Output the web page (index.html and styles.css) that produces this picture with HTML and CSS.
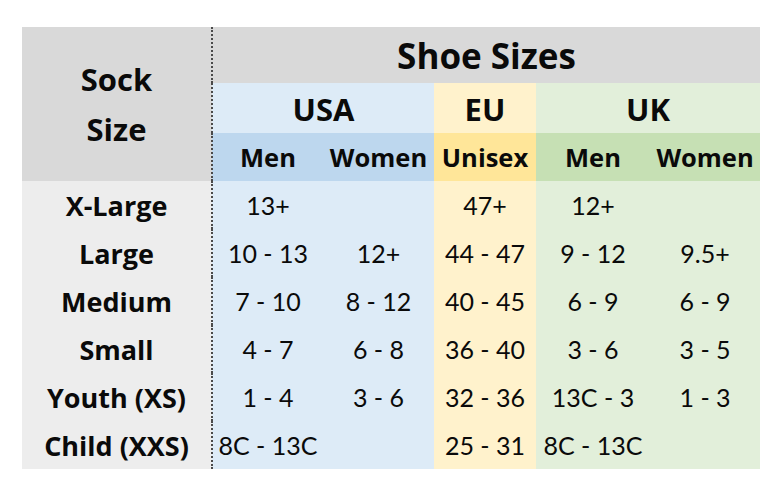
FILE: index.html
```html
<!DOCTYPE html>
<html>
<head>
<meta charset="utf-8">
<link rel="stylesheet" href="styles.css">
</head>
<body>
<table class="sizes">
  <colgroup>
    <col class="c-sock">
    <col class="c-usm">
    <col class="c-usw">
    <col class="c-eu">
    <col class="c-ukm">
    <col class="c-ukw">
  </colgroup>
  <thead>
    <tr class="r1">
      <th class="sock" rowspan="3">Sock<br>Size</th>
      <th class="title" colspan="5">Shoe Sizes</th>
    </tr>
    <tr class="r2">
      <th class="us-l" colspan="2">USA</th>
      <th class="eu-l">EU</th>
      <th class="uk-l" colspan="2">UK</th>
    </tr>
    <tr class="r3">
      <th class="us-d">Men</th>
      <th class="us-d">Women</th>
      <th class="eu-d">Unisex</th>
      <th class="uk-d">Men</th>
      <th class="uk-d">Women</th>
    </tr>
  </thead>
  <tbody>
    <tr><th class="lab">X-Large</th><td class="us">13+</td><td class="us"></td><td class="eu">47+</td><td class="uk">12+</td><td class="uk"></td></tr>
    <tr><th class="lab">Large</th><td class="us">10 - 13</td><td class="us">12+</td><td class="eu">44 - 47</td><td class="uk">9 - 12</td><td class="uk">9.5+</td></tr>
    <tr><th class="lab">Medium</th><td class="us">7 - 10</td><td class="us">8 - 12</td><td class="eu">40 - 45</td><td class="uk">6 - 9</td><td class="uk">6 - 9</td></tr>
    <tr><th class="lab">Small</th><td class="us">4 - 7</td><td class="us">6 - 8</td><td class="eu">36 - 40</td><td class="uk">3 - 6</td><td class="uk">3 - 5</td></tr>
    <tr><th class="lab">Youth (XS)</th><td class="us">1 - 4</td><td class="us">3 - 6</td><td class="eu">32 - 36</td><td class="uk">13C - 3</td><td class="uk">1 - 3</td></tr>
    <tr><th class="lab">Child (XXS)</th><td class="us">8C - 13C</td><td class="us"></td><td class="eu">25 - 31</td><td class="uk">8C - 13C</td><td class="uk"></td></tr>
  </tbody>
</table>
</body>
</html>
```

FILE: styles.css
```css
html, body {
  margin: 0;
  padding: 0;
  background: #ffffff;
}

body {
  padding: 27px 0 0 22px;
  font-family: Lato, "Liberation Sans", sans-serif;
  color: #0a0a0a;
}

.sizes {
  border-collapse: collapse;
  border-spacing: 0;
  table-layout: fixed;
  width: 738px;
}

.c-sock { width: 190px; }
.c-usm { width: 111px; }
.c-usw { width: 111px; }
.c-eu { width: 102px; }
.c-ukm { width: 114px; }
.c-ukw { width: 110px; }

.sizes th,
.sizes td {
  padding: 0;
  text-align: center;
  vertical-align: middle;
  white-space: nowrap;
}

.sizes th {
  font-family: "Open Sans", Lato, sans-serif;
  font-weight: 700;
}

.sock,
.lab {
  border-right: 2px dotted #4a4a4a;
}

.sock {
  background: #d9d9d9;
  font-size: 31px;
  line-height: 50px;
  padding-top: 4px;
}

.title {
  background: #d9d9d9;
  font-size: 35px;
}

.r1 { height: 56px; }
.r2 { height: 50px; }
.r3 { height: 48px; }

.r2 th {
  font-size: 31px;
  padding-top: 2px;
}

.r3 th {
  font-size: 25.5px;
}

.us-l { background: #ddebf7; }
.us-d { background: #bdd7ee; }
.eu-l { background: #fff2cc; }
.eu-d { background: #ffe699; }
.uk-l { background: #e2efda; }
.uk-d { background: #c6e0b4; }

tbody tr { height: 48px; }

.lab {
  background: #ededed;
  font-size: 27px;
}

tbody td {
  font-size: 25px;
  font-weight: 400;
}

.us { background: #ddebf7; }
.eu { background: #fff2cc; }
.uk { background: #e2efda; }
```
